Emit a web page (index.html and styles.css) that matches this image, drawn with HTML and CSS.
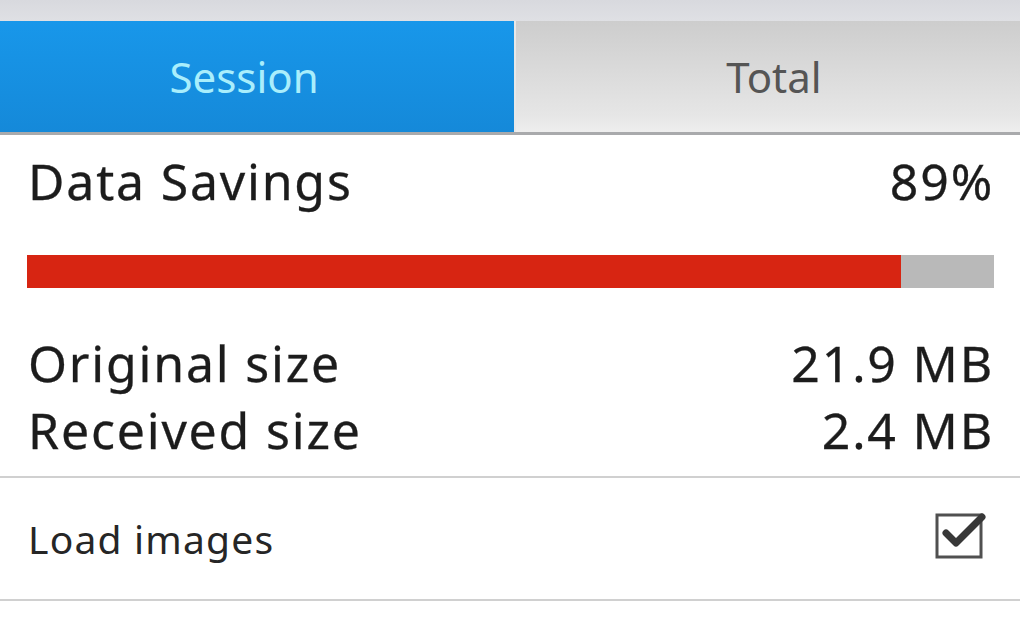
FILE: index.html
```html
<!DOCTYPE html>
<html>
<head>
<meta charset="utf-8">
<link rel="stylesheet" href="styles.css">
</head>
<body>
<div class="topstrip"></div>
<div class="tabs">
  <div class="tab active">Session</div>
  <div class="tab">Total</div>
</div>
<div class="content">
  <div class="row big head">
    <span>Data Savings</span><span>89%</span>
  </div>
  <div class="bar"><div class="fill" style="width:90.4%"></div></div>
  <div class="sizes">
    <div class="row big"><span>Original size</span><span>21.9 MB</span></div>
    <div class="row big"><span>Received size</span><span>2.4 MB</span></div>
  </div>
</div>
<div class="pref">
  <span>Load images</span>
  <svg class="check" width="52" height="52" viewBox="0 0 52 52">
    <rect x="3" y="4" width="44" height="42" fill="none" stroke="#505050" stroke-width="3"/>
    <path d="M12 22 L22 32 L48 6" fill="none" stroke="#383838" stroke-width="7" stroke-linejoin="round" stroke-linecap="round"/>
  </svg>
</div>
</body>
</html>
```
FILE: styles.css
```css
html, body {
  margin: 0;
  padding: 0;
  background: #fff;
  font-family: "Noto Sans", "Open Sans", sans-serif;
  width: 1020px;
  height: 630px;
  overflow: hidden;
}
.topstrip {
  height: 21px;
  background: linear-gradient(#d8d9de, #dfe0e4);
}
.tabs {
  display: flex;
  height: 111px;
  border-bottom: 3px solid #a9aaac;
}
.tab {
  display: flex;
  align-items: center;
  justify-content: center;
  font-size: 42px;
  color: #555;
}
.tab.active {
  width: 514px;
  box-sizing: border-box;
  padding-right: 26px;
  background: linear-gradient(#1897ea, #1589d9);
  color: #a9eefc;
}
.tab:not(.active) {
  flex: 1;
  padding-left: 12px;
  border-left: 2px solid #e8e8e8;
  background: linear-gradient(#cdcdcd, #e6e6e6 85%, #eeeeee);
}
.content {
  padding: 0 26px 0 28px;
}
.row {
  display: flex;
  justify-content: space-between;
}
.big {
  font-size: 50px;
  letter-spacing: 1.8px;
  color: #1c1c1c;
  line-height: 67px;
  -webkit-text-stroke: 0.3px #1c1c1c;
}
.head {
  padding-top: 13px;
}
.bar {
  margin-top: 40px;
  height: 33px;
  background: #b9b9b9;
  margin-left: -1px;
}
.fill {
  height: 100%;
  background: #d72512;
}
.sizes {
  margin-top: 42px;
}
.pref {
  margin-top: 12px;
  border-top: 2px solid #d0d0d0;
  border-bottom: 2px solid #d0d0d0;
  height: 121px;
  display: flex;
  align-items: center;
  justify-content: space-between;
  padding: 0 34px 0 28px;
  font-size: 39px;
  letter-spacing: 1.2px;
  color: #262626;
}
.check {
  margin-top: -4px;
}
```
